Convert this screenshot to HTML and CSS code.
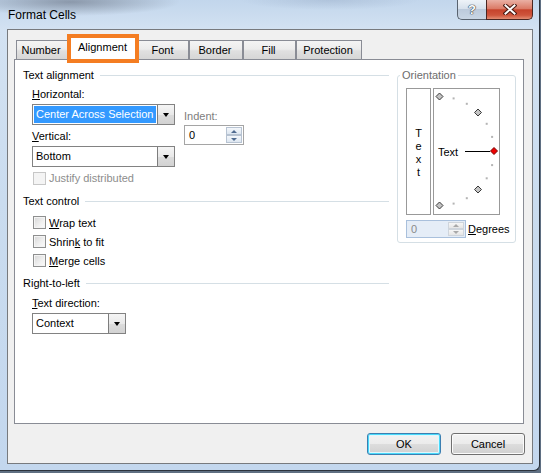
FILE: index.html
```html
<!DOCTYPE html>
<html lang="en">
<head>
<meta charset="utf-8">
<title>Format Cells</title>
<link rel="stylesheet" href="styles.css">
</head>
<body>
<div class="window">
  <div class="titlebar">
    <span class="title">Format Cells</span>
    <div class="caption">
      <span class="cap-help">?</span>
      <span class="cap-close">
        <svg width="14" height="11" viewBox="0 0 14 11"><path d="M2.5 1.5 L11.5 9.5 M11.5 1.5 L2.5 9.5" stroke="#4a1a12" stroke-width="4" stroke-linecap="square"/><path d="M2.5 1.5 L11.5 9.5 M11.5 1.5 L2.5 9.5" stroke="#ffffff" stroke-width="2" stroke-linecap="square"/></svg>
      </span>
    </div>
  </div>
  <div class="client">
    <div class="tabs">
      <div class="tab t-number">Number</div>
      <div class="tab tab-sel">Alignment</div>
      <div class="tab t-font">Font</div>
      <div class="tab t-border">Border</div>
      <div class="tab t-fill">Fill</div>
      <div class="tab t-prot">Protection</div>
    </div>
    <div class="panel">
      <div class="left">
        <div class="heading">Text alignment</div>
        <div class="align-row">
          <div class="align-fields">
            <div class="label"><u>H</u>orizontal:</div>
            <div class="select sel-wide sel-first"><span class="val hl">Center Across Selection</span><span class="dd"><i class="arrow"></i></span></div>
            <div class="label lbl-vert"><u>V</u>ertical:</div>
            <div class="select sel-wide sel-second"><span class="val">Bottom</span><span class="dd"><i class="arrow"></i></span></div>
          </div>
          <div class="indent">
            <div class="label gray">Indent:</div>
            <div class="spin">
              <span class="spin-val">0</span>
              <span class="spin-btns"><span class="sb up"><i></i></span><span class="sb down"><i></i></span></span>
            </div>
          </div>
        </div>
        <div class="check justify disabled"><span class="box"></span>Justify distributed</div>
        <div class="heading h-control">Text control</div>
        <div class="checks">
          <div class="check"><span class="box"></span><span><u>W</u>rap text</span></div>
          <div class="check"><span class="box"></span><span>Shrin<u>k</u> to fit</span></div>
          <div class="check"><span class="box"></span><span><u>M</u>erge cells</span></div>
        </div>
        <div class="heading h-rtl">Right-to-left</div>
        <div class="label lbl-dir"><u>T</u>ext direction:</div>
        <div class="select sel-narrow"><span class="val">Context</span><span class="dd"><i class="arrow"></i></span></div>
      </div>
      <fieldset class="orient">
        <legend>Orientation</legend>
        <div class="orient-boxes">
          <div class="vtext"><span>T</span><span>e</span><span>x</span><span>t</span></div>
          <div class="dial">
            <svg width="65" height="125" viewBox="0 0 65 125">
              <g fill="#b4b4b4">
                <rect x="18.6" y="8.4" width="2" height="2"/>
                <rect x="31.8" y="13.8" width="2" height="2"/>
                <rect x="51.7" y="33.8" width="2" height="2"/>
                <rect x="57.1" y="46.9" width="2" height="2"/>
                <rect x="57.1" y="75.1" width="2" height="2"/>
                <rect x="51.7" y="88.3" width="2" height="2"/>
                <rect x="31.8" y="108.2" width="2" height="2"/>
                <rect x="18.6" y="113.6" width="2" height="2"/>
              </g>
              <g fill="#c4c4c4" stroke="#3a3a3a" stroke-width="1">
                <polygon points="5.5,4 9,7.5 5.5,11 2,7.5"/>
                <polygon points="44,20 47.5,23.5 44,27 40.5,23.5"/>
                <polygon points="44,97 47.5,100.5 44,104 40.5,100.5"/>
                <polygon points="5.5,113 9,116.5 5.5,120 2,116.5"/>
              </g>
              <line x1="31" y1="62.5" x2="56" y2="62.5" stroke="#000" stroke-width="1"/>
              <polygon points="60,58.5 63.5,62 60,65.5 56.5,62" fill="#ee0000" stroke="#7a0000" stroke-width="1"/>
              <text x="4" y="67" class="dial-text">Text</text>
            </svg>
          </div>
        </div>
        <div class="deg-row">
          <div class="spin spin-dis">
            <span class="spin-val">0</span>
            <span class="spin-btns"><span class="sb up"><i></i></span><span class="sb down"><i></i></span></span>
          </div>
          <span class="deg-label"><u>D</u>egrees</span>
        </div>
      </fieldset>
    </div>
    <div class="buttons">
      <div class="btn btn-default">OK</div>
      <div class="btn">Cancel</div>
    </div>
  </div>
</div>
</body>
</html>
```

FILE: styles.css
```css
*, *::before, *::after { box-sizing: border-box; }
html, body { margin: 0; padding: 0; }
body {
  width: 541px;
  height: 473px;
  overflow: hidden;
  background: #5f6f82;
  font-family: "Liberation Sans", Arial, sans-serif;
  font-size: 11px;
  color: #000;
}
u { text-decoration: underline; text-underline-offset: 1px; }

.window {
  width: 540px;
  height: 471px;
  border-right: 1px solid #2c333c;
  border-bottom: 1px solid #2c333c;
  border-radius: 0 0 6px 0;
  padding: 0 6px 0 7px;
  display: flex;
  flex-direction: column;
  background:
    radial-gradient(ellipse 110px 14px at 70px 2px, rgba(70,76,90,0.45), rgba(70,76,90,0) 100%),
    radial-gradient(ellipse 90px 10px at 330px 0px, rgba(120,140,170,0.25), rgba(120,140,170,0) 100%),
    linear-gradient(180deg, #c2d6ec 0px, #d3e2f2 30px, #cadcef 200px, #c3d7ee 471px);
}

/* title bar */
.titlebar {
  height: 29px;
  display: flex;
  justify-content: space-between;
  align-items: flex-start;
  flex: none;
}
.title {
  margin-left: 1px;
  padding-top: 8px;
  line-height: 14px;
  font-size: 12px;
  color: #000;
}
.caption { display: flex; }
.cap-help, .cap-close {
  height: 20px;
  display: flex;
  align-items: center;
  justify-content: center;
}
.cap-help {
  width: 29px;
  border: 1px solid #59636f;
  border-top: none;
  border-right: none;
  border-radius: 0 0 0 5px;
  background: linear-gradient(180deg, #eef3f8 0%, #d7e1ec 45%, #bccadb 50%, #c9d6e4 100%);
  color: #fff;
  font-weight: bold;
  font-size: 13px;
  text-shadow: 0 0 1px #2d3540, 0 0 1px #2d3540, 0 0 1px #2d3540;
}
.cap-close {
  width: 47px;
  border: 1px solid #4a2621;
  border-top: none;
  border-radius: 0 0 5px 0;
  background: linear-gradient(180deg, #eab0a4 0%, #db7b67 45%, #c6432c 52%, #cf553c 80%, #e38d73 100%);
}

/* client */
.client {
  width: 526px;
  height: 435px;
  flex: none;
  border: 1px solid #777a7e;
  background: #f0f0f0;
  padding: 7px 7px 0 6px;
  display: flex;
  flex-direction: column;
}

.tabs {
  height: 22px;
  margin-left: 2px;
  display: flex;
  align-items: flex-end;
  position: relative;
  z-index: 2;
  flex: none;
}
.tab {
  height: 19px;
  border: 1px solid #898c95;
  border-bottom: none;
  background: linear-gradient(180deg, #f4f4f4 0%, #ececec 45%, #e0e0e0 55%, #d6d6d6 100%);
  display: flex;
  align-items: center;
  justify-content: center;
  padding: 1px 2px 0 0;
  line-height: 13px;
  white-space: nowrap;
}
.t-number { width: 52px; }
.t-font { width: 51px; }
.t-border { width: 54px; }
.t-fill { width: 53px; }
.t-prot { width: 66px; }
.tab-sel {
  width: 70px;
  height: 23px;
  margin-bottom: -1px;
  background: #fff;
  position: relative;
  padding: 0 1px 4px 0;
}
.tab-sel::after {
  content: "";
  position: absolute;
  left: -2px;
  top: -4px;
  width: 72px;
  height: 29px;
  border: 4px solid #f47d22;
}

.panel {
  width: 510px;
  height: 365px;
  flex: none;
  border: 1px solid #898c95;
  background: #fff;
  display: flex;
  align-items: flex-start;
  gap: 8px;
  padding: 8px 7px 0 8px;
}

.left { width: 366px; flex: none; }

.heading {
  display: flex;
  align-items: center;
  height: 14px;
  line-height: 14px;
  white-space: nowrap;
}
.heading::after {
  content: "";
  flex: 1;
  height: 1px;
  margin-left: 6px;
  background: #d5dfe5;
}
.h-control { margin-top: 8px; }
.h-rtl { margin-top: 6px; }

.label { line-height: 14px; padding-left: 9px; }
.gray { color: #7d7d7d; padding-left: 0; }

.align-row { display: flex; margin-top: 5px; }
.align-fields { width: 152px; }
.select {
  margin-left: 9px;
  height: 21px;
  border: 1px solid #828282;
  background: #fff;
  display: flex;
}
.sel-wide { width: 143px; }
.sel-narrow { width: 94px; margin-top: 3px; }
.sel-first { margin-top: 3px; }
.lbl-vert { margin-top: 4px; }
.sel-second { margin-top: 3px; }
.val {
  flex: 1;
  margin: 1px;
  padding-left: 2px;
  line-height: 17px;
  white-space: nowrap;
  overflow: hidden;
}
.hl { background: #3399ff; color: #fff; }
.dd {
  width: 17px;
  flex: none;
  border-left: 1px solid #7d7d7d;
  background: linear-gradient(180deg, #f5f5f5 0%, #e9e9e9 50%, #dcdcdc 51%, #d2d2d2 100%);
  display: flex;
  align-items: center;
  justify-content: center;
}
.arrow {
  width: 0;
  height: 0;
  border-top: 4px solid #000;
  border-left: 3.5px solid transparent;
  border-right: 3.5px solid transparent;
  margin-top: 1px;
}

.indent { margin-left: 9px; padding-top: 22px; }
.spin {
  width: 60px;
  height: 20px;
  margin-top: 2px;
  border: 1px solid #a5a5a5;
  background: #fff;
  display: flex;
}
.spin-val { flex: 1; padding-left: 4px; line-height: 18px; }
.spin-btns {
  width: 16px;
  margin: 1px;
  display: flex;
  flex-direction: column;
  gap: 0;
}
.sb {
  flex: 1;
  border: 1px solid #b7c3d2;
  background: linear-gradient(180deg, #f4f7fb, #dde6f0);
  display: flex;
  align-items: center;
  justify-content: center;
}
.sb i { width: 0; height: 0; border-left: 3px solid transparent; border-right: 3px solid transparent; }
.up i { border-bottom: 3px solid #4f6a8f; }
.down i { border-top: 3px solid #4f6a8f; }

.check {
  display: flex;
  align-items: center;
  height: 19px;
  padding-left: 10px;
  white-space: nowrap;
}
.box {
  width: 13px;
  height: 13px;
  flex: none;
  margin-right: 3px;
  border: 1px solid #8e8f8f;
  background: linear-gradient(135deg, #d6d6d6 0%, #f0f0f0 60%, #fbfbfb 100%);
  box-shadow: inset 0 0 0 1px #f4f4f4;
}
.justify { height: 16px; margin-top: 3px; }
.disabled { color: #8d8d8d; }
.disabled .box { border-color: #c7c7c7; background: #f4f4f4; box-shadow: none; }
.checks { margin-top: 5px; }
.lbl-dir { margin-top: 6px; }

/* orientation group */
.orient {
  width: 119px;
  flex: none;
  margin: 0;
  min-width: 0;
  border: 1px solid #d5dfe5;
  border-radius: 3px;
  padding: 6px 0 4px 8px;
}
.orient legend {
  padding: 0 2px;
  margin-left: -6px;
  line-height: 14px;
  color: #6d6d6d;
}
.orient-boxes { display: flex; gap: 2px; }
.vtext {
  width: 25px;
  height: 127px;
  border: 1px solid #999;
  display: flex;
  flex-direction: column;
  align-items: center;
  justify-content: center;
  line-height: 13px;
  padding-top: 2px;
}
.dial { width: 67px; height: 127px; border: 1px solid #999; }
.dial svg { display: block; }
.dial-text { font-family: "Liberation Sans", Arial, sans-serif; font-size: 11px; fill: #000; }

.deg-row { display: flex; align-items: center; margin-top: 5px; }
.spin-dis {
  height: 18px;
  margin-top: 0;
  border-color: #a9c0dc;
  background: #e5edf7;
  color: #8a8a8a;
}
.spin-dis .spin-val { line-height: 16px; }
.spin-dis .sb { border-color: #cfd5dc; background: linear-gradient(180deg, #f6f6f6, #e6e6e6); }
.spin-dis .up i { border-bottom-color: #a9a9a9; }
.spin-dis .down i { border-top-color: #a9a9a9; }
.deg-label { margin-left: 2px; }

/* dialog buttons */
.buttons {
  display: flex;
  justify-content: flex-end;
  gap: 10px;
  margin-top: 9px;
}
.btn {
  width: 74px;
  height: 22px;
  border: 1px solid #707070;
  border-radius: 3px;
  background: linear-gradient(180deg, #f3f3f3 0%, #ebebeb 50%, #dddddd 51%, #d0d0d0 100%);
  box-shadow: inset 0 0 0 1px #fbfbfb;
  display: flex;
  align-items: center;
  justify-content: center;
}
.btn-default {
  border-color: #3c7fb1;
  box-shadow: inset 0 0 0 1px #48d9fa, inset 0 0 0 2px #dff6fd;
}
```
